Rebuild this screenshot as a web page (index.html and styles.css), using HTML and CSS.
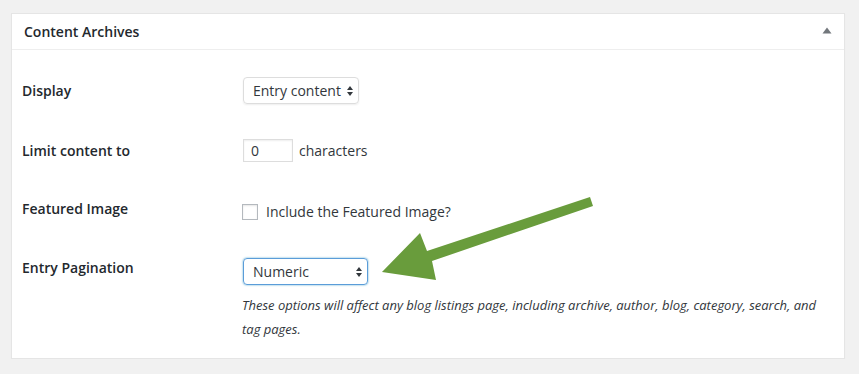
FILE: index.html
```html
<!DOCTYPE html>
<html lang="en">
<head>
  <meta charset="UTF-8">
  <title>Content Archives</title>
  <link rel="stylesheet" href="styles.css">
</head>
<body>
  <div class="postbox">
    <div class="postbox-header">
      <h2>Content Archives</h2>
      <svg class="toggle" width="10" height="7" viewBox="0 0 10 7"><polygon points="5,0.5 9.5,6.5 0.5,6.5" fill="#72777c"/></svg>
    </div>

    <div class="inside">
      <div class="row">
        <div class="label">Display</div>
        <div class="field">
          <div class="select">
            <span>Entry content</span>
            <svg width="6" height="11" viewBox="0 0 6 11"><polygon points="3,0 6,4 0,4" fill="#32373c"/><polygon points="0,6 6,6 3,10" fill="#32373c"/></svg>
          </div>
        </div>
      </div>

      <div class="row">
        <div class="label">Limit content to</div>
        <div class="field">
          <div class="text-input">0</div>
          <span class="after">characters</span>
        </div>
      </div>

      <div class="row">
        <div class="label label-up">Featured Image</div>
        <div class="field">
          <span class="checkbox"></span>
          <span class="check-label">Include the Featured Image?</span>
        </div>
      </div>

      <div class="row row-last">
        <div class="label label-up">Entry Pagination</div>
        <div class="field-col">
          <div class="field">
            <div class="select select-focus">
              <span>Numeric</span>
              <svg width="6" height="11" viewBox="0 0 6 11"><polygon points="3,0 6,4 0,4" fill="#32373c"/><polygon points="0,6 6,6 3,10" fill="#32373c"/></svg>
            </div>
          </div>
          <p class="description">These options will affect any blog listings page, including archive, author, blog, category, search, and tag pages.</p>
        </div>
      </div>
    </div>

    <!-- annotation arrow drawn over the screenshot -->
    <svg class="arrow" width="859" height="374" viewBox="0 0 859 374">
      <polygon points="590,197 593,206 432,261 436,280 382,272 420,233 427,251" fill="#699c3c"/>
    </svg>
  </div>
</body>
</html>
```

FILE: styles.css
```css
body {
  margin: 0;
  padding: 13px 14px 0 11px;
  background-color: #f1f1f1;
  font-family: "Open Sans", "Noto Sans", sans-serif;
  font-size: 14px;
  color: #32373c;
}
.postbox {
  background-color: #fff;
  border: 1px solid #e5e5e5;
  box-shadow: 0 1px 1px rgba(0, 0, 0, 0.04);
}
.postbox-header {
  display: flex;
  align-items: center;
  justify-content: space-between;
  height: 35px;
  padding: 0 12px;
  border-bottom: 1px solid #eee;
}
.postbox-header h2 {
  margin: 0;
  font-size: 14px;
  font-weight: 600;
  color: #23282d;
}
.toggle {
  margin-top: -2px;
}
.inside {
  padding: 10px 10px 0;
}
.row {
  display: flex;
  align-items: flex-start;
  padding: 17px 0 16px;
}
.row-last {
  padding-top: 18px;
  padding-bottom: 17px;
}
.row-last .label-up {
  margin-top: -4px;
}
.label {
  width: 221px;
  flex-shrink: 0;
  line-height: 27px;
  font-weight: 600;
  color: #23282d;
}
.label-up {
  margin-top: -2px;
}
.field {
  display: flex;
  align-items: center;
  height: 27px;
}
.field-col {
  flex: 1;
  padding-right: 10px;
}
.select {
  display: flex;
  align-items: center;
  justify-content: space-between;
  box-sizing: border-box;
  width: 116px;
  height: 27px;
  padding: 0 5px 0 9px;
  border: 1px solid #ddd;
  border-radius: 4px;
  box-shadow: 0 1px 2px rgba(0, 0, 0, 0.07);
  color: #32373c;
}
.select svg {
  margin-top: 1px;
}
.select-focus {
  width: 125px;
  border-color: #5b9dd9;
  box-shadow: 0 0 2px rgba(30, 140, 190, 0.8);
}
.text-input {
  box-sizing: border-box;
  width: 50px;
  height: 23px;
  padding: 0 7px;
  line-height: 21px;
  border: 1px solid #ddd;
  box-shadow: inset 0 1px 2px rgba(0, 0, 0, 0.07);
}
.after {
  margin-left: 6px;
}
.checkbox {
  display: block;
  box-sizing: border-box;
  width: 16px;
  height: 16px;
  margin-left: -1px;
  margin-top: 2px;
  border: 1px solid #b4b9be;
  box-shadow: inset 0 1px 2px rgba(0, 0, 0, 0.1);
}
.check-label {
  margin-left: 8px;
  margin-top: 1px;
}
.description {
  margin: 8px 0 0 -1px;
  font-size: 13px;
  font-style: italic;
  line-height: 24px;
  color: #32373c;
}
.arrow {
  position: absolute;
  top: 0;
  left: 0;
  pointer-events: none;
}
```
